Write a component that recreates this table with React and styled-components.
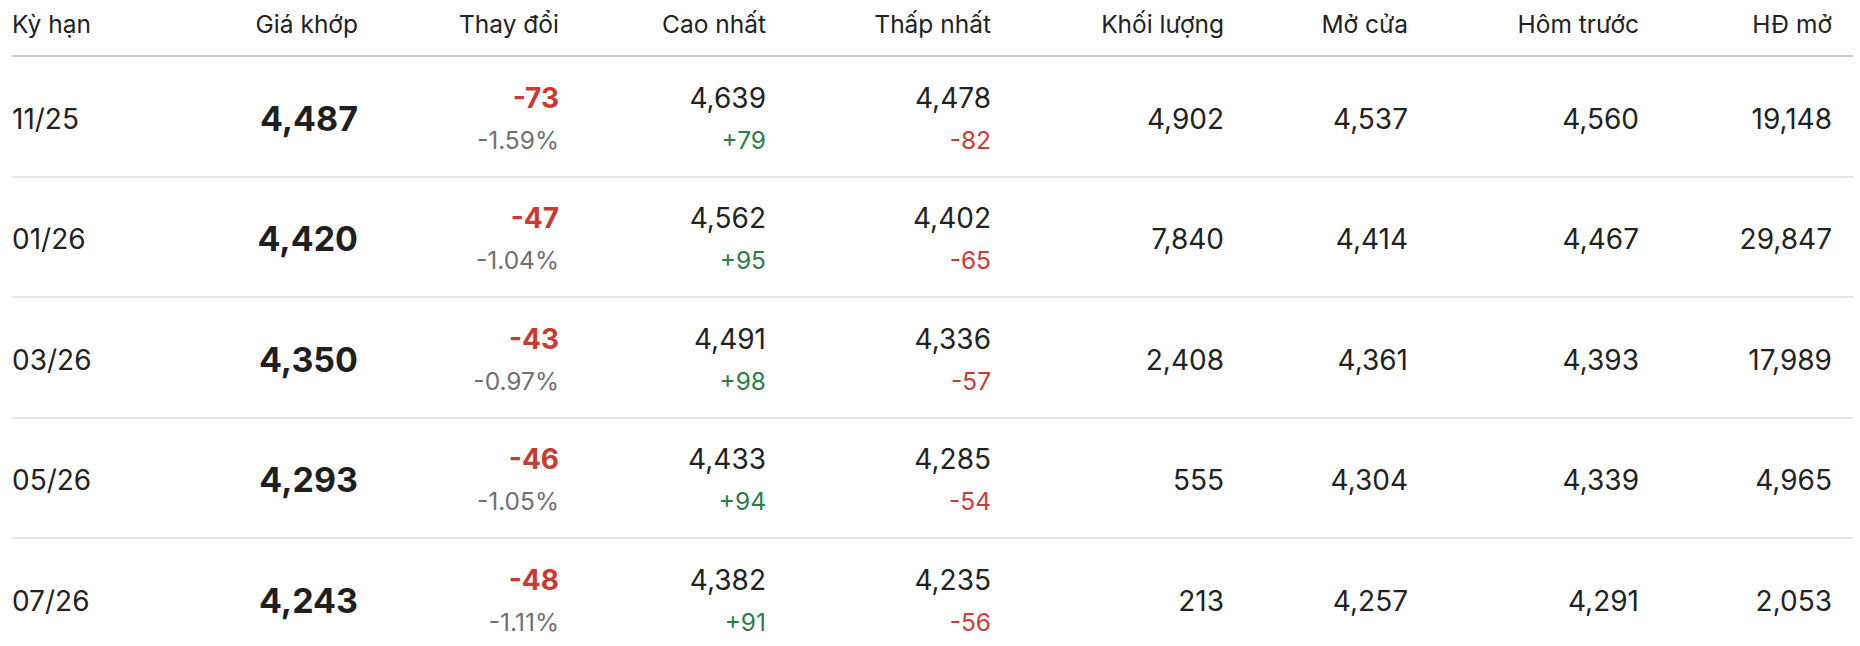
import React from "react";
import styled, { createGlobalStyle } from "styled-components";

const Global = createGlobalStyle`
  html, body { margin: 0; padding: 0; background: #ffffff; }
  body { font-family: Inter, "Noto Sans", "Liberation Sans", sans-serif; color: #222222; }
`;

const Table = styled.div`
  padding: 0 7px 0 12px;
  width: 1841px;
`;

const cols = "150px 196px 201px 207px 225px 233px 184px 231px 193px";

const HeaderRow = styled.div`
  display: grid;
  grid-template-columns: ${cols};
  padding-right: 21px;
  height: 57px;
  box-sizing: border-box;
  padding-top: 9px;
  border-bottom: 2px solid #c9ced1;
`;

const HeadCell = styled.div`
  font-size: 24.5px;
  line-height: 30px;
  font-weight: 400;
  color: #222222;
  text-align: ${(p) => (p.$left ? "left" : "right")};
  white-space: nowrap;
`;

const Row = styled.div`
  display: grid;
  grid-template-columns: ${cols};
  padding-right: 21px;
  padding-top: 5px;
  box-sizing: border-box;
  align-items: center;
  height: 120.5px;
  border-bottom: 2px solid #e4e8eb;
`;

const Cell = styled.div`
  display: flex;
  flex-direction: column;
  align-items: ${(p) => (p.$left ? "flex-start" : "flex-end")};
  white-space: nowrap;
`;

const Plain = styled.span`
  font-size: 28px;
  line-height: 42px;
  color: #222222;
`;

const Price = styled.span`
  font-size: 34px;
  line-height: 42px;
  font-weight: 700;
  color: #1f1f1f;
`;

const Change = styled.span`
  font-size: 28px;
  line-height: 42px;
  font-weight: 700;
  color: #c93a32;
`;

const Sub = styled.span`
  font-size: 24.5px;
  line-height: 42px;
  color: ${(p) => (p.$tone === "up" ? "#2e7d46" : p.$tone === "down" ? "#c73b3b" : "#707070")};
`;

const headers = [
  "Kỳ hạn",
  "Giá khớp",
  "Thay đổi",
  "Cao nhất",
  "Thấp nhất",
  "Khối lượng",
  "Mở cửa",
  "Hôm trước",
  "HĐ mở",
];

const rows = [
  ["11/25", "4,487", "-73", "-1.59%", "4,639", "+79", "4,478", "-82", "4,902", "4,537", "4,560", "19,148"],
  ["01/26", "4,420", "-47", "-1.04%", "4,562", "+95", "4,402", "-65", "7,840", "4,414", "4,467", "29,847"],
  ["03/26", "4,350", "-43", "-0.97%", "4,491", "+98", "4,336", "-57", "2,408", "4,361", "4,393", "17,989"],
  ["05/26", "4,293", "-46", "-1.05%", "4,433", "+94", "4,285", "-54", "555", "4,304", "4,339", "4,965"],
  ["07/26", "4,243", "-48", "-1.11%", "4,382", "+91", "4,235", "-56", "213", "4,257", "4,291", "2,053"],
];

export default function App() {
  return (
    <>
      <Global />
      <Table>
        <HeaderRow>
          {headers.map((h, i) => (
            <HeadCell key={h} $left={i === 0}>
              {h}
            </HeadCell>
          ))}
        </HeaderRow>
        {rows.map((r) => (
          <Row key={r[0]}>
            <Cell $left>
              <Plain>{r[0]}</Plain>
            </Cell>
            <Cell>
              <Price>{r[1]}</Price>
            </Cell>
            <Cell>
              <Change>{r[2]}</Change>
              <Sub>{r[3]}</Sub>
            </Cell>
            <Cell>
              <Plain>{r[4]}</Plain>
              <Sub $tone="up">{r[5]}</Sub>
            </Cell>
            <Cell>
              <Plain>{r[6]}</Plain>
              <Sub $tone="down">{r[7]}</Sub>
            </Cell>
            <Cell>
              <Plain>{r[8]}</Plain>
            </Cell>
            <Cell>
              <Plain>{r[9]}</Plain>
            </Cell>
            <Cell>
              <Plain>{r[10]}</Plain>
            </Cell>
            <Cell>
              <Plain>{r[11]}</Plain>
            </Cell>
          </Row>
        ))}
      </Table>
    </>
  );
}
